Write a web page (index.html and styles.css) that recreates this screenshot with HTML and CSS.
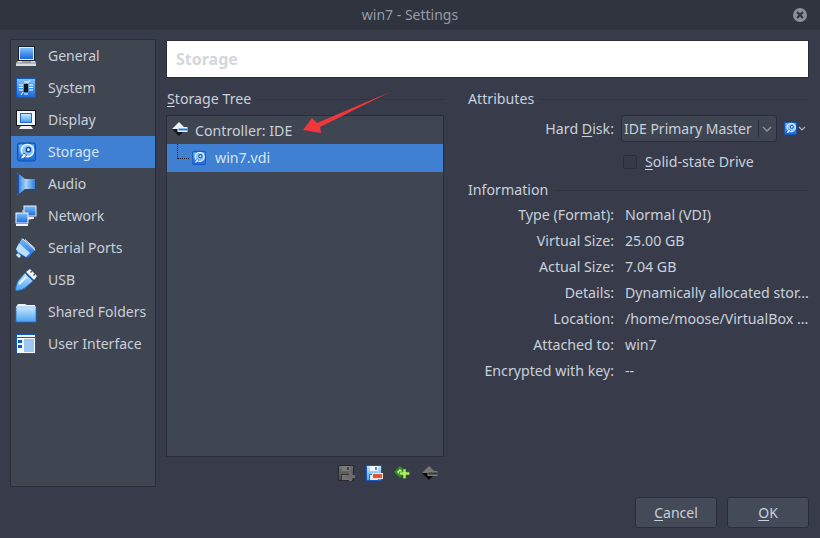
FILE: index.html
```html
<!DOCTYPE html>
<html>

<head>
    <title>win7 - Settings</title>
    <link rel="stylesheet" href="styles.css">
</head>

<body>
    <svg class="sprite">
        <defs>
            <linearGradient id="blue" x1="0" y1="0" x2="0" y2="1">
                <stop offset="0" stop-color="#7cc0fa" />
                <stop offset="1" stop-color="#1a68dc" />
            </linearGradient>
            <linearGradient id="sky" x1="0" y1="0" x2="0" y2="1">
                <stop offset="0" stop-color="#c8e6fd" />
                <stop offset="1" stop-color="#4aa3f0" />
            </linearGradient>
            <linearGradient id="cone" x1="0" y1="0" x2="1" y2="0">
                <stop offset="0" stop-color="#1d6fd8" />
                <stop offset="0.5" stop-color="#a8d6fa" />
                <stop offset="1" stop-color="#2b7fdc" />
            </linearGradient>
            <symbol id="i-general" viewBox="0 0 22 22">
                <rect x="3" y="1" width="17" height="15" fill="#1c1f26" />
                <rect x="4" y="2" width="15" height="13" fill="#e6ebf0" />
                <rect x="5" y="3" width="13" height="11" fill="url(#blue)" />
                <path d="M3 16h17l1 2v3H1v-3z" fill="#d9dde2" />
                <path d="M1 18h20" stroke="#8b9099" />
                <path d="M7 17h9" stroke="#6d727b" />
            </symbol>
            <symbol id="i-system" viewBox="0 0 22 22">
                <rect x="1" y="1" width="20" height="20" fill="#1259c4" />
                <rect x="2" y="2" width="18" height="18" fill="url(#blue)" />
                <rect x="9" y="7" width="4" height="8" fill="#14161b" />
                <path d="M4 8h4M4 10.500h4M4 13h4M14 8h4M14 10.500h4M14 13h4M10 4v2M12 4v2M10 16v2M12 16v2M15 3l-2 3M6 18l2-3" stroke="#fff" fill="none" />
            </symbol>
            <symbol id="i-display" viewBox="0 0 22 22">
                <rect x="1" y="1" width="20" height="16" fill="#14161b" />
                <rect x="2" y="2" width="18" height="14" fill="#f4f6f8" />
                <rect x="5" y="4" width="12" height="10" fill="#1f66d4" />
                <rect x="6" y="5" width="10" height="8" fill="url(#sky)" />
                <path d="M6 17h10l2 3H4z" fill="#eef0f3" />
            </symbol>
            <symbol id="i-disk" viewBox="0 0 20 20">
                <rect x="0.500" y="0.500" width="19" height="19" rx="2" fill="#1f6fdc" stroke="#0f4fb4" />
                <rect x="2" y="2" width="16" height="16" rx="1" fill="url(#blue)" />
                <circle cx="11" cy="8.500" r="6.500" fill="#8cc6f8" stroke="#f0f8ff" stroke-width="1.500" />
                <circle cx="12" cy="7.500" r="2.300" fill="#dceefe" stroke="#0f4fb4" stroke-width="1.500" />
                <path d="M3.500 17c3 .5 5-1 6.500-4l-3-2z" fill="#f2f8ff" stroke="#0f4fb4" stroke-width="0.800" />
            </symbol>
            <symbol id="i-disk-side" viewBox="0 0 22 22">
                <use href="#i-disk" x="2" y="1" width="19" height="20" />
            </symbol>
            <symbol id="i-audio" viewBox="0 0 22 22">
                <path d="M2 0l2 1 6 5h10v10H10l-6 5-2 1z" fill="url(#cone)" />
                <path d="M3 1v20" stroke="#0f52bc" stroke-width="2" />
            </symbol>
            <symbol id="i-network" viewBox="0 0 22 22">
                <rect x="9" y="1" width="12" height="10" fill="url(#blue)" stroke="#e8edf2" />
                <path d="M11 12h8v2h-8z" fill="#e8edf2" />
                <rect x="1" y="8" width="12" height="10" fill="url(#blue)" stroke="#f2f5f8" />
                <path d="M1 19h12v2H1z" fill="#f2f5f8" />
                <path d="M7 6h2M13 14h3" stroke="#e8edf2" />
            </symbol>
            <symbol id="i-serial" viewBox="0 0 22 22">
                <path d="M7 1L21 13l-3 2-5 6-3-1-7-4-2-3z" fill="url(#blue)" />
                <path d="M4 6l11 10-4 4-8-5-2-3z" fill="#b9e0fc" />
                <path d="M8 2l12 11M10 2.500l10 9" stroke="#e7f4ff" />
                <path d="M2 17l3 3" stroke="#c6e5fd" stroke-width="3" />
            </symbol>
            <symbol id="i-usb" viewBox="0 0 22 22">
                <path d="M15 0l7 7-3 4-8-8z" fill="#f2f5f8" />
                <path d="M15.500 3.500l1.500-1.500M18.500 6.500l1.500-1.500" stroke="#50565f" stroke-width="1.400" />
                <path d="M10 4l8 8-8 7c-3 2-6 2-9 3-1-1 0-5 2-10z" fill="url(#sky)" stroke="#1d6fd8" stroke-width="0.800" />
                <path d="M4 15l7-7" stroke="#f2faff" stroke-width="2" />
            </symbol>
            <symbol id="i-folder" viewBox="0 0 22 22">
                <path d="M1 6l2-3h7l2 1h8v4H1z" fill="#e6f4fe" />
                <rect x="1" y="6" width="20" height="15" fill="url(#sky)" stroke="#1d6fd8" stroke-width="0.800" />
                <path d="M1 6h20" stroke="#eef8ff" />
            </symbol>
            <symbol id="i-ui" viewBox="0 0 22 22">
                <rect x="1" y="1" width="20" height="20" fill="#1259c4" />
                <rect x="2" y="2" width="18" height="2" fill="#eef4fb" />
                <rect x="2" y="5" width="18" height="15" fill="#f4f8fc" />
                <rect x="9" y="6" width="10" height="13" fill="#9cc7f4" />
                <rect x="3" y="7" width="4" height="3" fill="#1259c4" />
                <rect x="3" y="12" width="4" height="3" fill="#1259c4" />
            </symbol>
            <symbol id="i-ctrl" viewBox="0 0 16 16">
                <path d="M0 8l7-7 5 5H6v2z" fill="#eef1f5" />
                <path d="M0 8l7 7 4-4H6V8z" fill="#14161b" />
                <rect x="5.500" y="6" width="10" height="5" fill="#eef4fb" />
                <rect x="6.500" y="7.500" width="9" height="2" fill="#2a7bd8" />
            </symbol>
            <symbol id="i-save" viewBox="0 0 16 16">
                <rect x="0.500" y="0.500" width="15" height="15" fill="url(#sky)" stroke="#1259c4" />
                <rect x="4" y="1" width="8" height="5" fill="#f2f7fc" />
                <rect x="9" y="2" width="2" height="3" fill="#3f8fe4" />
                <rect x="3" y="9" width="10" height="6" fill="#2a7bd8" />
                <rect x="4" y="10" width="8" height="5" fill="#dbe8f5" />
            </symbol>
        </defs>
    </svg>

    <div class="dialog">
        <div class="titlebar">
            <span class="title">win7 - Settings</span>
            <span class="close">
                <svg width="8" height="8" viewBox="0 0 8 8">
                    <path d="M1 1l6 6M7 1L1 7" stroke="#2f343f" stroke-width="2" />
                </svg>
            </span>
        </div>

        <div class="content">
            <ul class="sidebar">
                <li class="side-item"><svg class="side-icon"><use href="#i-general" /></svg>General</li>
                <li class="side-item"><svg class="side-icon"><use href="#i-system" /></svg>System</li>
                <li class="side-item"><svg class="side-icon"><use href="#i-display" /></svg>Display</li>
                <li class="side-item selected"><svg class="side-icon"><use href="#i-disk-side" /></svg>Storage</li>
                <li class="side-item"><svg class="side-icon"><use href="#i-audio" /></svg>Audio</li>
                <li class="side-item"><svg class="side-icon"><use href="#i-network" /></svg>Network</li>
                <li class="side-item"><svg class="side-icon"><use href="#i-serial" /></svg>Serial Ports</li>
                <li class="side-item"><svg class="side-icon"><use href="#i-usb" /></svg>USB</li>
                <li class="side-item"><svg class="side-icon"><use href="#i-folder" /></svg>Shared Folders</li>
                <li class="side-item"><svg class="side-icon"><use href="#i-ui" /></svg>User Interface</li>
            </ul>

            <div class="main">
                <div class="page-title">Storage</div>

                <div class="columns">
                    <div class="left">
                        <div class="group-head"><span><u>S</u>torage Tree</span></div>
                        <div class="tree">
                            <div class="tree-row">
                                <svg class="ctrl-icon"><use href="#i-ctrl" /></svg>
                                <span class="ctrl-text">Controller: IDE</span>
                            </div>
                            <div class="tree-row selected child">
                                <span class="tree-line"></span>
                                <svg class="disk-icon"><use href="#i-disk" /></svg>
                                win7.vdi
                            </div>
                            <svg class="arrow" width="100" height="50" viewBox="0 0 100 50">
                                <path d="M1 39L10 27l5 5L88 1 18 36l1 6z" fill="#f0383c" />
                            </svg>
                        </div>
                        <div class="toolbar">
                            <span class="tool dim">
                                <svg width="16" height="16"><use href="#i-save" /></svg>
                                <svg class="tool-badge" width="9" height="9" viewBox="0 0 9 9">
                                    <path d="M3 0h3v3h3v3H6v3H3V6H0V3h3z" fill="#d5d9de" />
                                </svg>
                            </span>
                            <span class="tool">
                                <svg width="16" height="16"><use href="#i-save" /></svg>
                                <b class="minus"></b>
                            </span>
                            <span class="tool">
                                <svg width="16" height="16" viewBox="0 0 16 16">
                                    <path d="M0 7l6-6 6 6-6 6z" fill="#2f8f22" />
                                    <path d="M3 7l3-3 3 3-3 3z" fill="#c6f08e" />
                                    <path d="M9 4h3v3h3.500v3H12v3.500H9V10H5.500V7H9z" fill="#b4ee66" stroke="#2f7d1e" stroke-width="0.700" />
                                </svg>
                            </span>
                            <span class="tool dim">
                                <svg width="16" height="16"><use href="#i-ctrl" /></svg>
                            </span>
                        </div>
                    </div>

                    <div class="right">
                        <div class="group-head"><span>Attributes</span></div>
                        <div class="disk-row">
                            <span class="field-label">Hard <u>D</u>isk:</span>
                            <div class="combo">
                                <span class="combo-text">IDE Primary Master</span>
                                <span class="combo-sep"></span>
                                <svg width="10" height="6" viewBox="0 0 10 6">
                                    <path d="M1 1l4 4 4-4" fill="none" stroke="#8f96a3" stroke-width="1.300" />
                                </svg>
                            </div>
                            <span class="disk-btn">
                                <svg width="13" height="15"><use href="#i-disk" /></svg>
                                <svg width="8" height="5" viewBox="0 0 8 5">
                                    <path d="M1 1l3 3 3-3" fill="none" stroke="#aab1bd" stroke-width="1.200" />
                                </svg>
                            </span>
                        </div>
                        <div class="check-row">
                            <span class="checkbox"></span>
                            <span><u>S</u>olid-state Drive</span>
                        </div>
                        <div class="group-head info-head"><span>Information</span></div>
                        <dl class="info">
                            <dt>Type (Format):</dt>
                            <dd>Normal (VDI)</dd>
                            <dt>Virtual Size:</dt>
                            <dd>25.00 GB</dd>
                            <dt>Actual Size:</dt>
                            <dd>7.04 GB</dd>
                            <dt>Details:</dt>
                            <dd>Dynamically allocated stor...</dd>
                            <dt>Location:</dt>
                            <dd>/home/moose/VirtualBox ...</dd>
                            <dt>Attached to:</dt>
                            <dd>win7</dd>
                            <dt>Encrypted with key:</dt>
                            <dd>--</dd>
                        </dl>
                    </div>
                </div>
            </div>
        </div>

        <div class="footer">
            <button class="btn"><u>C</u>ancel</button>
            <button class="btn"><u>O</u>K</button>
        </div>
    </div>
</body>

</html>
```

FILE: styles.css
```css
* {
    box-sizing: border-box;
}

body {
    margin: 0;
    background-color: #383c4a;
    color: #c8d0da;
    font-family: "Noto Sans", sans-serif;
    font-size: 14px;
    line-height: 20px;
}

u {
    text-underline-offset: 2px;
}

.sprite {
    display: block;
    width: 0;
    height: 0;
}

.dialog {
    width: 820px;
    height: 538px;
    overflow: hidden;
}

.titlebar {
    height: 30px;
    background-color: #2f343f;
    display: flex;
    align-items: center;
    justify-content: center;
    position: relative;
}

.title {
    font-size: 14px;
    color: #959ca8;
}

.close {
    position: absolute;
    right: 13px;
    top: 8px;
    width: 14px;
    height: 14px;
    border-radius: 50%;
    background-color: #8a8f9a;
    display: flex;
    align-items: center;
    justify-content: center;
}

.content {
    display: flex;
    height: 457px;
    padding: 9px 11px 0 10px;
}

.sidebar {
    list-style: none;
    margin: 0 10px 0 0;
    padding: 0;
    width: 146px;
    height: 448px;
    background-color: #404552;
    border: 1px solid #2b2e39;
}

.side-item {
    height: 32px;
    display: flex;
    align-items: center;
    gap: 11px;
    padding-left: 4px;
}

.side-icon {
    width: 22px;
    height: 22px;
    flex-shrink: 0;
}

.selected {
    background-color: #3f80d3;
    color: #d8e4f2;
}

.main {
    flex: 1;
}

.page-title {
    height: 38px;
    margin-top: 1px;
    background-color: #fff;
    border: 1px solid #2b2e39;
    padding-left: 9px;
    font-size: 16px;
    font-weight: 700;
    line-height: 37px;
    color: #d3d6db;
}

.columns {
    display: grid;
    grid-template-columns: 278px 341px;
    column-gap: 24px;
    margin-top: 11px;
    font-size: 14.2px;
}

.group-head {
    display: flex;
    align-items: center;
    gap: 6px;
}

.group-head::after {
    content: "";
    flex: 1;
    height: 1px;
    background-color: #2f343f;
}

.left .group-head {
    margin-bottom: 6px;
    padding-left: 1px;
}

.tree {
    height: 342px;
    background-color: #404552;
    border: 1px solid #2b2e39;
    position: relative;
}

.tree-row {
    height: 28px;
    display: flex;
    align-items: center;
    padding-left: 5px;
}

.ctrl-icon {
    width: 16px;
    height: 16px;
    margin: -3px 7px 0 0;
}

.ctrl-text {
    padding-top: 2px;
}

.child {
    padding-left: 25px;
    position: relative;
}

.tree-line {
    position: absolute;
    left: 10px;
    top: 0;
    width: 12px;
    height: 15px;
    border-left: 1px dotted #14161b;
    border-bottom: 1px dotted #14161b;
}

.disk-icon {
    width: 14px;
    height: 16px;
    margin-right: 9px;
}

.arrow {
    position: absolute;
    left: 135px;
    top: -25px;
}

.toolbar {
    display: flex;
    justify-content: flex-end;
    gap: 10px;
    padding: 8px 5px 0 0;
}

.tool {
    width: 18px;
    height: 16px;
    position: relative;
    display: flex;
    justify-content: center;
}

.dim {
    filter: grayscale(1) brightness(0.5);
}

.minus {
    position: absolute;
    right: 0;
    bottom: 2px;
    width: 11px;
    height: 6px;
    background-color: #e2533a;
    border: 1px solid #f3e6df;
}

.tool-badge {
    position: absolute;
    right: 0;
    bottom: 0;
}

.disk-row {
    display: flex;
    align-items: center;
    height: 27px;
    margin-top: 6px;
}

.field-label {
    width: 146px;
    text-align: right;
}

.combo {
    width: 156px;
    height: 27px;
    margin-left: 7px;
    background-color: #404552;
    border: 1px solid #2b2e39;
    border-radius: 3px;
    display: flex;
    align-items: center;
    padding-left: 2px;
    font-size: 14px;
}

.combo-text {
    width: 134px;
    white-space: nowrap;
}

.combo-sep {
    width: 1px;
    height: 17px;
    margin-right: 3px;
    background-color: #2b2e39;
}

.disk-btn {
    display: flex;
    align-items: center;
    gap: 1px;
    margin-left: 7px;
}

.check-row {
    display: flex;
    align-items: center;
    gap: 8px;
    height: 26px;
    margin-top: 7px;
    padding-left: 155px;
}

.checkbox {
    width: 14px;
    height: 14px;
    background-color: #363a47;
    border: 1px solid #2b2e39;
    border-radius: 2px;
}

.info-head {
    margin-top: 5px;
}

.info {
    display: grid;
    grid-template-columns: 146px 1fr;
    grid-auto-rows: 26px;
    column-gap: 11px;
    align-items: center;
    margin: 2px 0 0;
}

.info dt {
    text-align: right;
    white-space: nowrap;
}

.info dd {
    margin: 0;
    white-space: nowrap;
}

.footer {
    display: flex;
    justify-content: flex-end;
    gap: 10px;
    padding: 10px 11px 0 0;
}

.btn {
    width: 82px;
    height: 31px;
    background-color: #444a58;
    border: 1px solid #2b2e39;
    border-radius: 3px;
    color: #c8d0da;
    font: inherit;
}
```
